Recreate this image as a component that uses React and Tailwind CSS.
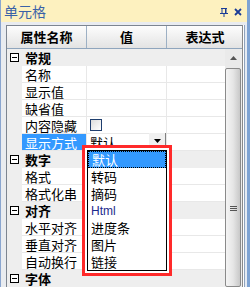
import React from 'react';

const ROWS = [
  { group: true, label: '常规' },
  { label: '名称' },
  { label: '显示值' },
  { label: '缺省值' },
  { label: '内容隐藏', checkbox: true },
  { label: '显示方式', selected: true, value: '默认', dropdown: true },
  { group: true, label: '数字' },
  { label: '格式' },
  { label: '格式化串' },
  { group: true, label: '对齐' },
  { label: '水平对齐' },
  { label: '垂直对齐' },
  { label: '自动换行' },
  { group: true, label: '字体' }
];

const OPTIONS = ['默认', '转码', '摘码', 'Html', '进度条', '图片', '链接'];

const font = { fontFamily: '"Noto Sans CJK SC", "Noto Sans", sans-serif' };

function PinIcon() {
  return (
    <svg width="8" height="9" viewBox="0 0 8 9">
      <path d="M1 0.5h6M2 1v4M5.5 1v4M0 5.5h8M4 6v3" stroke="#1a3c96" strokeWidth="1" fill="none" />
      <rect x="5" y="1" width="1.5" height="4" fill="#1a3c96" />
    </svg>
  );
}

function CloseIcon() {
  return (
    <svg width="8" height="8" viewBox="0 0 8 8">
      <path d="M1 1L7 7M7 1L1 7" stroke="#1a3c96" strokeWidth="1.8" />
    </svg>
  );
}

function Row({ row }) {
  if (row.group) {
    return (
      <div className="h-[17px] flex items-center bg-[#eeeeee] border-b border-[#eeeeee]">
        <div className="w-[15px] flex justify-center">
          <div className="w-[9px] h-[9px] border border-black bg-white flex items-center justify-center">
            <div className="w-[5px] h-px bg-black" />
          </div>
        </div>
        <span className="ml-[3px] text-[13px] font-bold text-black leading-none">{row.label}</span>
      </div>
    );
  }
  return (
    <div className="h-[17px] flex bg-[#eeeeee]">
      <div className="w-[15px]" />
      <div
        className={`w-[65px] flex items-center pl-[3px] border-b border-r border-[#e8e8e8] text-[13px] leading-none ${
          row.selected ? 'bg-[#3399ff] text-white' : 'bg-white text-black'
        }`}
      >
        {row.label}
      </div>
      <div className="w-[80px] flex items-center bg-white border-b border-r border-[#e8e8e8] pl-[3px] relative">
        {row.checkbox && (
          <div className="w-[12px] h-[12px] border border-[#1f3e6e] bg-gradient-to-br from-[#dcdcdc] to-white" />
        )}
        {row.value && <span className="text-[13px] leading-none text-black">{row.value}</span>}
        {row.dropdown && (
          <div className="absolute right-0 top-[-1px] w-[17px] h-[17px] bg-[#f0f0f0] border-r border-b border-[#808080] flex items-center justify-center">
            <svg width="7" height="4" viewBox="0 0 7 4">
              <path d="M0 0h7L3.5 4z" fill="#000" />
            </svg>
          </div>
        )}
      </div>
      <div className="w-[58px] bg-white border-b border-[#e8e8e8]" />
    </div>
  );
}

export default function App() {
  return (
    <div className="w-[250px] h-[287px] overflow-hidden relative bg-[#e9ecf0] border-l border-[#8aa6d0] border-r-[3px] border-r-[#7ea3d3] flex flex-col" style={font}>
      {/* Title */}
      <div className="h-[22px] shrink-0 bg-[#fdf1bf] flex items-center justify-between pl-[3px] pr-[5px]">
        <span className="text-[14px] text-[#3a62a8] leading-none">单元格</span>
        <div className="flex items-center gap-[6px] pt-[2px]">
          <PinIcon />
          <CloseIcon />
        </div>
      </div>

      <div className="flex-1 flex pt-[3px] pl-[5px]">
        <div className="flex-1 flex flex-col border-l border-t border-[#7d8590] bg-[#eeeeee]">
          {/* Header */}
          <div className="h-[23px] shrink-0 flex border-b border-[#8fa5bd] bg-gradient-to-b from-[#fdfdfd] to-[#e3e3e3] text-[13px] font-bold text-black">
            <div className="w-[80px] flex items-center justify-center border-r border-[#9db0c4]">属性名称</div>
            <div className="w-[80px] flex items-center justify-center border-r border-[#9db0c4]">值</div>
            <div className="w-[74px] flex items-center justify-center pl-[2px]">表达式</div>
          </div>

          <div className="flex-1 flex">
            <div className="w-[218px] flex flex-col">
              {ROWS.map((row, i) => (
                <Row key={i} row={row} />
              ))}
            </div>
            {/* Scrollbar */}
            <div className="w-[16px] flex flex-col bg-[#eaeaea]">
              <div className="h-[17px] flex items-center justify-center">
                <svg width="7" height="4" viewBox="0 0 7 4">
                  <path d="M0 4h7L3.5 0z" fill="#555" />
                </svg>
              </div>
              <div className="flex-1 mt-[2px] border border-[#8a8a8a] rounded-[2px] bg-gradient-to-r from-[#f4f4f4] via-[#e6e6e6] to-[#c8c8c8] flex flex-col items-center pt-[137px] gap-[1px]">
                <div className="w-[7px] h-px bg-[#555]" />
                <div className="w-[7px] h-px bg-[#555]" />
                <div className="w-[7px] h-px bg-[#555]" />
              </div>
            </div>
          </div>
        </div>
        {/* right frame lines */}
        <div className="w-[5px] flex">
          <div className="w-px bg-[#8a8a8a]" />
          <div className="w-px bg-white" />
          <div className="w-px bg-[#8fa3bd]" />
          <div className="w-[2px] bg-[#e6ebf2]" />
        </div>
      </div>

      {/* Dropdown list */}
      <div className="absolute left-[81px] top-[145px] w-[90px] h-[131px] border-[3px] border-[#ff2a2a] bg-white p-[2px]">
        <div className="w-full h-full border border-black bg-white flex flex-col">
          {OPTIONS.map((opt, i) => (
            <div
              key={opt}
              className={`h-[17px] shrink-0 flex items-center pl-[3px] text-[13px] leading-none ${
                i === 0 ? 'bg-[#3399ff] text-white border border-dotted border-black' : opt === 'Html' ? 'text-[#1b2a8c]' : 'text-black'
              }`}
              style={opt === 'Html' ? { fontFamily: '"Liberation Sans", sans-serif', fontSize: 12 } : undefined}
            >
              {opt}
            </div>
          ))}
        </div>
      </div>
    </div>
  );
}
